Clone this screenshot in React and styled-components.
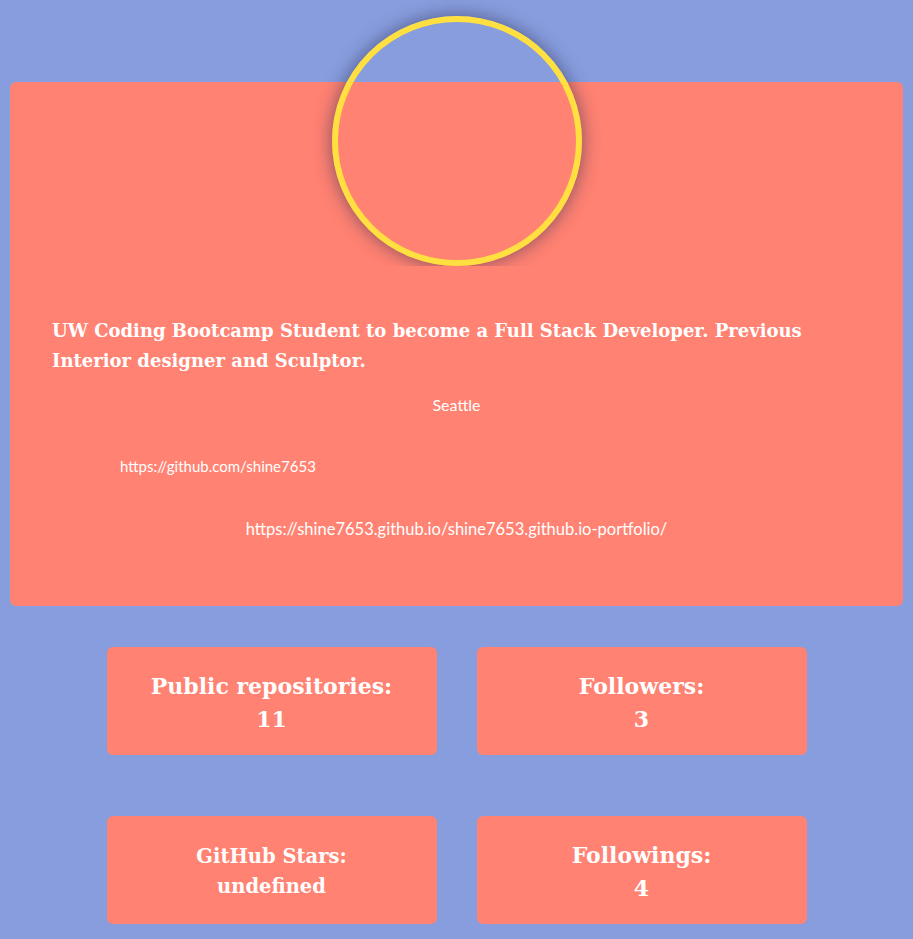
import React from 'react';
import styled, {createGlobalStyle} from 'styled-components';

const GlobalStyle = createGlobalStyle`
  html, body {
    margin: 0;
    padding: 0;
    background: #879ddd;
  }
`;

const Page = styled.div`
  min-height: 100vh;
  box-sizing: border-box;
  padding: 16px 10px 15px;
  background: #879ddd;
`;

const ProfileCard = styled.section`
  margin-top: 66px;
  padding: 0 42px 65px;
  background: #ff8272;
  border-radius: 6px;
  display: flex;
  flex-direction: column;
  color: #fff;
`;

const Avatar = styled.div`
  box-sizing: border-box;
  width: 250px;
  height: 250px;
  margin: -66px auto 0;
  border: 6px solid #ffe040;
  border-radius: 50%;
  box-shadow: 0 0 18px rgba(40, 40, 80, 0.6);
  clip-path: inset(-30px -30px 0 -30px);
`;

const Bio = styled.h2`
  margin: 50px 0 0;
  font-family: "DejaVu Serif", serif;
  font-size: 18px;
  line-height: 30px;
  font-weight: bold;
`;

const Info = styled.p`
  margin: ${props => props.gap}px 0 0;
  padding-left: ${props => props.indent || 0}px;
  text-align: ${props => props.indent ? 'left' : 'center'};
  font-family: Lato, "Open Sans", sans-serif;
  font-size: ${props => props.size}px;
  line-height: 24px;
`;

const StatGrid = styled.div`
  display: grid;
  grid-template-columns: 330px 330px;
  justify-content: center;
  column-gap: 40px;
  row-gap: 61px;
  margin-top: 41px;
`;

const StatBox = styled.div`
  box-sizing: border-box;
  height: 108px;
  padding-top: 4px;
  background: #ff8272;
  border-radius: 6px;
  display: flex;
  flex-direction: column;
  align-items: center;
  justify-content: center;
  color: #fff;
  font-family: "DejaVu Serif", serif;
  font-weight: bold;
  font-size: ${props => props.small ? 19.5 : 22}px;
  line-height: ${props => props.small ? 30 : 33}px;
`;

const stats = [
  {label: 'Public repositories:', value: '11'},
  {label: 'Followers:', value: '3'},
  {label: 'GitHub Stars:', value: 'undefined', small: true},
  {label: 'Followings:', value: '4'},
];

export default function App() {
  return (<>
    <GlobalStyle/>
    <Page>
      <ProfileCard>
        <Avatar/>
        <Bio>UW Coding Bootcamp Student to become a Full Stack Developer. Previous Interior designer and Sculptor.</Bio>
        <Info gap={17} size={16}>Seattle</Info>
        <Info gap={37} size={15} indent={68}>https://github.com/shine7653</Info>
        <Info gap={39} size={16.5}>https://shine7653.github.io/shine7653.github.io-portfolio/</Info>
      </ProfileCard>
      <StatGrid>
        {stats.map(stat => (
          <StatBox key={stat.label} small={stat.small}>
            <div>{stat.label}</div>
            <div>{stat.value}</div>
          </StatBox>
        ))}
      </StatGrid>
    </Page>
  </>);
}
